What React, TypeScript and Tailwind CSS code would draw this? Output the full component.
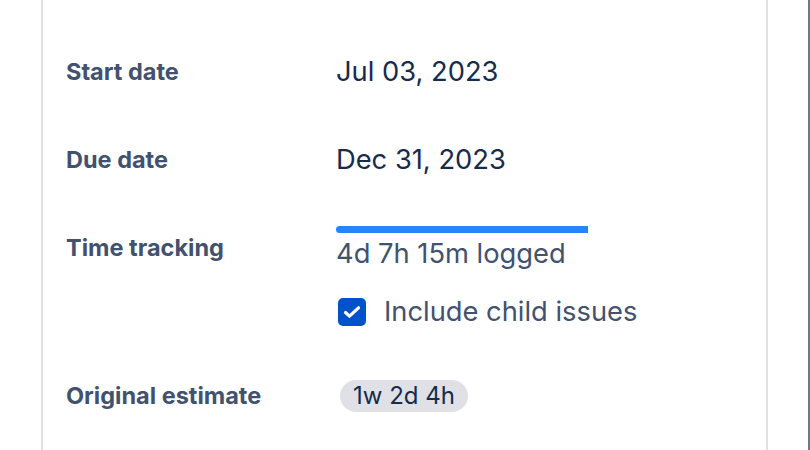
import React from "react";

export default function App() {
  return (
    <div
      className="w-[810px] h-[450px] bg-white flex overflow-hidden"
      style={{ fontFamily: "Inter, 'Noto Sans', sans-serif" }}
    >
      <div className="w-[41px] shrink-0" />
      <div className="w-[727px] h-full border-x-2 border-[#dfe1e6] pl-[23px] pt-[58px] flex flex-col">
        <div className="flex items-center h-[28px]">
          <div className="w-[270px] text-[23.5px] font-bold text-[#42526e]">Start date</div>
          <div className="text-[27.3px] text-[#172b4d]">Jul 03, 2023</div>
        </div>
        <div className="flex items-center h-[28px] mt-[60px]">
          <div className="w-[270px] text-[23.5px] font-bold text-[#42526e]">Due date</div>
          <div className="text-[27.3px] text-[#172b4d]">Dec 31, 2023</div>
        </div>
        <div className="flex mt-[52px]">
          <div className="w-[270px] text-[23.5px] font-bold text-[#42526e] leading-[30px] pt-[7px]">Time tracking</div>
          <div className="flex flex-col">
            <div className="w-[252px] h-[7px] rounded-l-full bg-[#2684ff]" />
            <div className="text-[27.3px] text-[#42526e] leading-[30px] mt-[6px]">4d 7h 15m logged</div>
            <div className="flex items-center mt-[29px] ml-[2px] h-[28px]">
              <div className="w-[28px] h-[28px] rounded-[5px] bg-[#0052cc] flex items-center justify-center">
                <svg width="20" height="20" viewBox="0 0 20 20" fill="none">
                  <path d="M3.5 10.5l4 3.7L16.5 5.8" stroke="white" strokeWidth="3.2" strokeLinecap="round" strokeLinejoin="round" />
                </svg>
              </div>
              <div className="ml-[18px] text-[27.3px] text-[#42526e]">Include child issues</div>
            </div>
          </div>
        </div>
        <div className="flex items-center mt-[52px]">
          <div className="w-[274px] text-[23.5px] font-bold text-[#42526e]">Original estimate</div>
          <div className="h-[32px] px-[13px] rounded-full bg-[#dfe1e6] flex items-center text-[24px] text-[#172b4d]">1w 2d 4h</div>
        </div>
      </div>
      <div className="w-[40px] shrink-0" />
      <div className="w-[2px] h-full bg-[#6b778c]" />
    </div>
  );
}
